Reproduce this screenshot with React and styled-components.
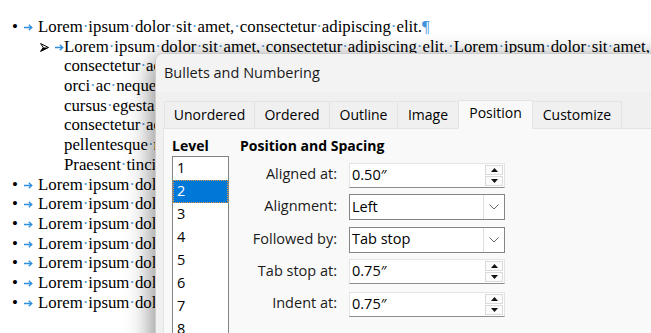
import React from 'react';
import styled, { createGlobalStyle } from 'styled-components';

const GlobalStyle = createGlobalStyle`
  html, body { margin: 0; padding: 0; background: #fff; }
  body { width: 651px; height: 333px; overflow: hidden; }
`;

const Page = styled.div`
  position: relative;
  width: 651px;
  height: 333px;
  overflow: hidden;
  background: #fff;
`;

const Doc = styled.div`
  padding-top: 17px;
  font-family: "Liberation Serif", "Times New Roman", serif;
  font-size: 16.8px;
  line-height: 19.7px;
  color: #000;
`;

const Line = styled.div`
  white-space: nowrap;
  height: 19.7px;
  padding-left: ${(p) => p.$indent}px;
`;

const Mark = styled.span`
  display: inline-block;
  width: ${(p) => p.$w}px;
`;

const Space = styled.span`
  color: #4f97d4;
`;

const Pilcrow = styled.span`
  color: #3d93dc;
`;

const TabArrow = styled.svg`
  display: inline-block;
  vertical-align: ${(p) => p.$va}px;
`;

const Arrowhead = styled.svg`
  display: inline-block;
  vertical-align: 0;
`;

/* ---------- dialog ---------- */

const Dialog = styled.div`
  position: absolute;
  left: 155px;
  top: 53px;
  width: 540px;
  height: 310px;
  box-sizing: border-box;
  background: #f0f0f0;
  border: 1px solid #cdcdcd;
  border-radius: 8px 8px 0 0;
  box-shadow: -5px 8px 26px rgba(0, 0, 0, 0.36), 0 -2px 18px rgba(0, 0, 0, 0.12);
  font-family: "Open Sans", "Noto Sans", sans-serif;
  color: #000;
  display: flex;
  flex-direction: column;
  overflow: hidden;
`;

const TitleBar = styled.div`
  height: 38px;
  flex: none;
  background: #f3f3f3;
  display: flex;
  align-items: center;
  padding: 0 0 1px 8px;
  box-sizing: border-box;
  font-size: 14.5px;
  color: #1a1a1a;
`;

const TabRow = styled.div`
  display: flex;
  align-items: flex-end;
  height: 36px;
  flex: none;
  padding-left: 9px;
  position: relative;
  z-index: 1;
`;

const Tab = styled.div`
  box-sizing: border-box;
  width: ${(p) => p.$w}px;
  height: ${(p) => (p.$active ? 29 : 27)}px;
  margin-bottom: ${(p) => (p.$active ? -1 : 0)}px;
  display: flex;
  align-items: center;
  justify-content: center;
  font-size: 14px;
  background: ${(p) => (p.$active ? '#f9f9f9' : '#f0f0f0')};
  border: 1px solid #e3e3e3;
  border-bottom: ${(p) => (p.$active ? '1px solid #f9f9f9' : 'none')};
  margin-left: -1px;
  padding-bottom: ${(p) => (p.$active ? 4 : 2)}px;
  border-radius: 2px 2px 0 0;
`;

const Panel = styled.div`
  flex: 1;
  margin-left: 7px;
  background: #f9f9f9;
  border: 1px solid #e3e3e3;
  display: flex;
  gap: 11px;
  padding: 8px 0 0 8px;
`;

const Column = styled.div`
  display: flex;
  flex-direction: column;
  width: ${(p) => p.$w}px;
`;

const Heading = styled.div`
  font-weight: 700;
  font-size: 14px;
  height: 18px;
  line-height: 18px;
`;

const LevelList = styled.div`
  margin-top: 1px;
  width: 57px;
  box-sizing: border-box;
  height: 200px;
  background: #fff;
  border: 1px solid #838383;
`;

const LevelItem = styled.div`
  box-sizing: border-box;
  height: 23px;
  line-height: 20px;
  padding-left: 3px;
  font-size: 14.5px;
  background: ${(p) => (p.$selected ? '#0078d7' : 'transparent')};
  color: ${(p) => (p.$selected ? '#fff' : '#000')};
  border: 1px ${(p) => (p.$selected ? 'dotted #e29a3c' : 'solid transparent')};
`;

const Form = styled.div`
  margin-top: 7px;
  display: grid;
  grid-template-columns: 97px 156px;
  grid-auto-rows: 26px;
  column-gap: 12px;
  row-gap: 6.25px;
  align-items: center;
`;

const Label = styled.div`
  text-align: right;
  font-size: 14.5px;
  padding-bottom: 3px;
  color: #1a1a1a;
`;

const SpinBox = styled.div`
  box-sizing: border-box;
  height: 25px;
  display: flex;
  align-items: center;
  background: #fff;
  border: 1px solid #e4e4e4;
  border-bottom-color: #8d8d8d;
  padding: 0 1px 0 2px;
  font-size: 14.5px;
`;

const Value = styled.div`
  flex: 1;
  padding-bottom: 2px;
`;

const SpinButtons = styled.div`
  display: flex;
  flex-direction: column;
  width: 18px;
  gap: 1px;
`;

const SpinButton = styled.div`
  box-sizing: border-box;
  height: 10px;
  background: #fbfbfb;
  border: 1px solid #dadada;
  display: flex;
  align-items: center;
  justify-content: center;
`;

const Combo = styled.div`
  box-sizing: border-box;
  height: 26px;
  display: flex;
  align-items: stretch;
  background: #fff;
  border: 1px solid #858585;
  padding-left: 2px;
  font-size: 14.5px;
`;

const ComboValue = styled.div`
  flex: 1;
  display: flex;
  align-items: center;
  padding-bottom: 2px;
`;

const ComboButton = styled.div`
  width: 20px;
  border-left: 1px solid #e0e0e0;
  display: flex;
  align-items: center;
  justify-content: center;
`;

/* ---------- helpers ---------- */

const Dotted = ({ text }) => {
  const parts = text.split(' ');
  return parts.map((w, i) => (
    <React.Fragment key={i}>
      {w}
      {i < parts.length - 1 && <Space>·</Space>}
    </React.Fragment>
  ));
};

const Arrow = ({ va = 1 }) => (
  <TabArrow $va={va} width="9" height="7" viewBox="0 0 9 7">
    <path d="M0 3.5 H7.5 M4.8 0.8 L7.8 3.5 L4.8 6.2" fill="none" stroke="#2d8ee0" strokeWidth="1.3" />
  </TabArrow>
);

const BulletLine = ({ text, pil }) => (
  <Line $indent={12}>
    <Mark $w={12}>•</Mark>
    <Mark $w={14}>
      <Arrow />
    </Mark>
    <Dotted text={text} />
    {pil && <Pilcrow>¶</Pilcrow>}
  </Line>
);

const SubLine = ({ text }) => (
  <Line $indent={40}>
    <Mark $w={15}>
      <Arrowhead width="9" height="9" viewBox="0 0 9 9">
        <path d="M0.6 0.6 L8.5 4.5 L0.6 8.4 L3.2 4.5 Z" fill="none" stroke="#000" strokeWidth="1" />
        <path d="M3 4.5 L8.6 4.5 L0.4 8.7 Z" fill="#000" />
      </Arrowhead>
    </Mark>
    <Mark $w={9}>
      <Arrow />
    </Mark>
    <Dotted text={text} />
  </Line>
);

const ContLine = ({ text }) => (
  <Line $indent={64}>
    <Dotted text={text} />
  </Line>
);

const Up = () => (
  <svg width="7" height="4" viewBox="0 0 7 4">
    <path d="M0 4 L3.5 0 L7 4 Z" fill="#111" />
  </svg>
);
const Down = () => (
  <svg width="7" height="4" viewBox="0 0 7 4">
    <path d="M0 0 L3.5 4 L7 0 Z" fill="#111" />
  </svg>
);
const Chevron = () => (
  <svg width="10" height="6" viewBox="0 0 10 6">
    <path d="M0.5 0.5 L5 5 L9.5 0.5" fill="none" stroke="#666" strokeWidth="1" />
  </svg>
);

const Spin = ({ value }) => (
  <SpinBox>
    <Value>{value}</Value>
    <SpinButtons>
      <SpinButton>
        <Up />
      </SpinButton>
      <SpinButton>
        <Down />
      </SpinButton>
    </SpinButtons>
  </SpinBox>
);

const Select = ({ value }) => (
  <Combo>
    <ComboValue>{value}</ComboValue>
    <ComboButton>
      <Chevron />
    </ComboButton>
  </Combo>
);

const lorem = 'Lorem ipsum dolor sit amet, consectetur adipiscing elit.';

const tabs = [
  { label: 'Unordered', w: 91 },
  { label: 'Ordered', w: 76 },
  { label: 'Outline', w: 69 },
  { label: 'Image', w: 62 },
  { label: 'Position', w: 75, active: true },
  { label: 'Customize', w: 90 },
];

export default function App() {
  return (
    <Page>
      <GlobalStyle />
      <Doc>
        <BulletLine text={lorem} pil />
        <SubLine text={lorem + ' Lorem ipsum dolor sit amet, consectetur adipiscing elit.'} />
        <ContLine text="consectetur adipiscing elit. Sed do eiusmod tempor incididunt ut labore" />
        <ContLine text="orci ac neque vehicula, nec mattis lorem fermentum. Integer at" />
        <ContLine text="cursus egestas nisl, vel faucibus justo. Aliquam erat volutpat." />
        <ContLine text="consectetur adipiscing elit. Nulla facilisi. Vivamus vitae" />
        <ContLine text="pellentesque nibh, sed tristique magna. Donec ultrices" />
        <ContLine text="Praesent tincidunt sem non augue tempor, at dictum." />
        {Array.from({ length: 7 }).map((_, i) => (
          <BulletLine key={i} text={lorem} pil />
        ))}
      </Doc>

      <Dialog>
        <TitleBar>Bullets and Numbering</TitleBar>
        <TabRow>
          {tabs.map((t) => (
            <Tab key={t.label} $w={t.w} $active={t.active}>
              {t.label}
            </Tab>
          ))}
        </TabRow>
        <Panel>
          <Column $w={57}>
            <Heading>Level</Heading>
            <LevelList>
              {[1, 2, 3, 4, 5, 6, 7, 8, 9, 10].map((n) => (
                <LevelItem key={n} $selected={n === 2}>
                  {n}
                </LevelItem>
              ))}
            </LevelList>
          </Column>
          <Column $w={270}>
            <Heading>Position and Spacing</Heading>
            <Form>
              <Label>Aligned at:</Label>
              <Spin value="0.50″" />
              <Label>Alignment:</Label>
              <Select value="Left" />
              <Label>Followed by:</Label>
              <Select value="Tab stop" />
              <Label>Tab stop at:</Label>
              <Spin value="0.75″" />
              <Label>Indent at:</Label>
              <Spin value="0.75″" />
            </Form>
          </Column>
        </Panel>
      </Dialog>
    </Page>
  );
}
